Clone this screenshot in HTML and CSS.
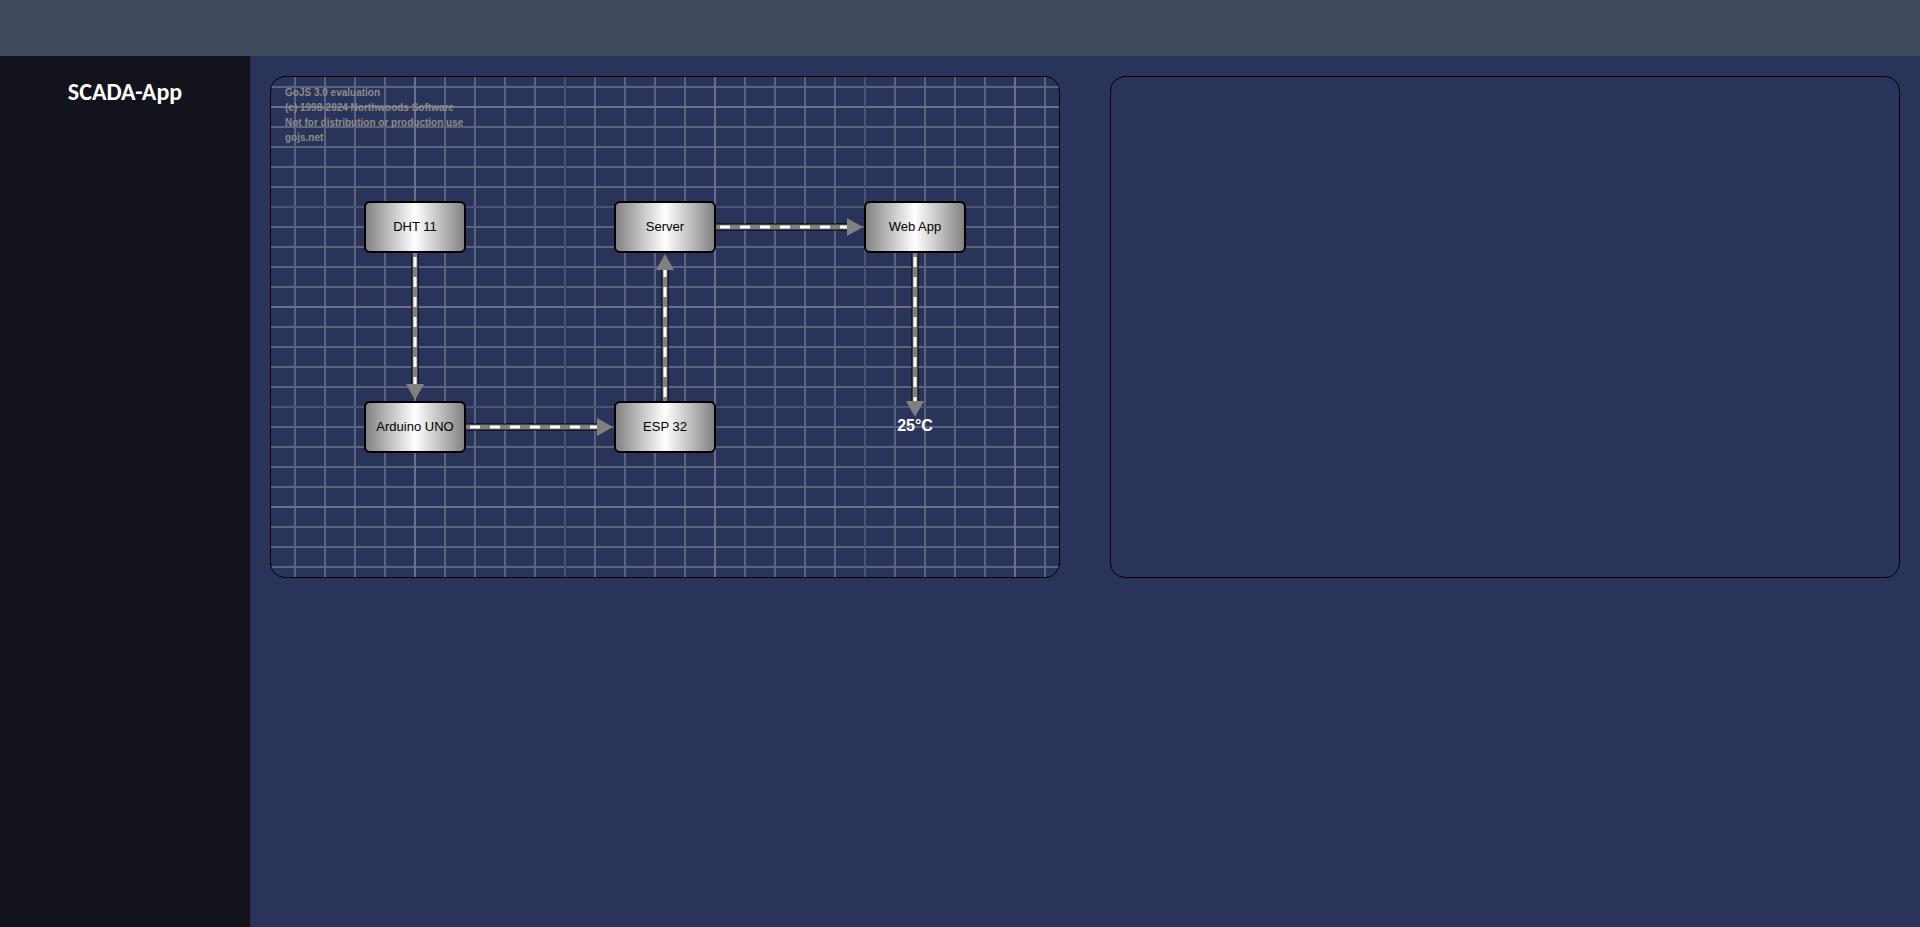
FILE: index.html
```html
<!DOCTYPE html>
<html lang="en">
<head>
<meta charset="utf-8">
<title>SCADA-App</title>
<link rel="stylesheet" href="styles.css">
</head>
<body>
<header class="topbar"></header>
<div class="shell">
  <aside class="sidebar"><h1 class="brand">SCADA-App</h1></aside>
  <main class="panels">
    <section class="panel">
      <svg class="diagram" role="img" aria-label="Process diagram">
        <defs>
          <linearGradient id="metal">
            <stop offset="0" stop-color="#808080"/>
            <stop offset="0.5" stop-color="#ffffff"/>
            <stop offset="1" stop-color="#808080"/>
          </linearGradient>
          <pattern id="minor" x="-6" y="0" width="30" height="20" patternUnits="userSpaceOnUse">
            <path class="line" d="M0 10H30M30 0V20M0 0V20"/>
          </pattern>
          <pattern id="major" x="44" y="130" width="300" height="200" patternUnits="userSpaceOnUse">
            <path class="line-major" d="M0 100H300M100 0V200"/>
            <path class="line-mid" d="M0 200H300M0 0H300M250 0V200"/>
          </pattern>
          <g id="node"><rect class="node" x="-50" y="-25" width="100" height="50" rx="5"/></g>
        </defs>
        <rect width="100%" height="100%" fill="url(#minor)"/>
        <rect width="100%" height="100%" fill="url(#major)"/>

        <g class="watermark">
          <text x="14" y="19">GoJS 3.0 evaluation</text>
          <text x="14" y="34">(c) 1998-2024 Northwoods Software</text>
          <text x="14" y="49">Not for distribution or production use</text>
          <text x="14" y="64">gojs.net</text>
        </g>

        <g class="pipe">
          <path d="M144 176V308M195 350H327M394 324V192M445 150H577M644 176V325"/>
          <path class="pipe-body" d="M144 176V308M195 350H327M394 324V192M445 150H577M644 176V325"/>
          <path class="pipe-flow" d="M144 176V308M195 350H327M394 324V192M445 150H577M644 176V325"/>
        </g>
        <path class="arrow" d="M135 307H153L144 323ZM326 341V359L342 350ZM385 193H403L394 177ZM576 141V159L592 150ZM635 324H653L644 340Z"/>

        <g class="labels">
          <use href="#node" x="144" y="150"/><text x="144" y="154">DHT 11</text>
          <use href="#node" x="394" y="150"/><text x="394" y="154">Server</text>
          <use href="#node" x="644" y="150"/><text x="644" y="154">Web App</text>
          <use href="#node" x="144" y="350"/><text x="144" y="354">Arduino UNO</text>
          <use href="#node" x="394" y="350"/><text x="394" y="354">ESP 32</text>
        </g>
        <text class="reading" x="644" y="354">25°C</text>
      </svg>
    </section>
    <section class="panel"></section>
  </main>
</div>
</body>
</html>
```
FILE: styles.css
```css
* { box-sizing: border-box; }
body {
  margin: 0;
  min-height: 100vh;
  display: flex;
  flex-direction: column;
  background: #2a3359;
  font-family: "Liberation Sans", Arial, sans-serif;
}
.topbar { height: 56px; background: #3e4a5c; }
.shell { flex: 1; display: flex; }
.sidebar { width: 250px; padding: 20px; background: #13131e; text-align: center; }
.brand {
  margin: 0;
  color: #fff;
  font: bold 24px/32px Calibri, Carlito, "Open Sans", sans-serif;
}
.panels {
  flex: 1;
  display: grid;
  grid-template-columns: 1fr 1fr;
  align-items: start;
  gap: 50px;
  padding: 20px;
}
.panel {
  height: 502px;
  border: 1px solid #000;
  border-radius: 15px;
  overflow: hidden;
}
.diagram { display: block; width: 100%; height: 100%; }
.line { stroke: #d3d3d3; stroke-opacity: 0.3; stroke-width: 2; }
.line-major { stroke: #d3d3d3; stroke-opacity: 0.12; stroke-width: 2; }
.line-mid { stroke: #2a3359; stroke-opacity: 0.35; stroke-width: 2; }
.watermark { font-size: 10px; font-weight: bold; fill: #8f8c88; }
.pipe { fill: none; stroke: #000; stroke-width: 7; }
.pipe-body { stroke: #808080; stroke-width: 5; }
.pipe-flow { stroke: #fff; stroke-width: 3; stroke-dasharray: 10 10; stroke-dashoffset: -4; }
.arrow { fill: #808080; }
.node { fill: url(#metal); stroke: #000; stroke-width: 2; }
.labels { font-size: 13px; text-anchor: middle; fill: #000; }
.reading { font-size: 16px; font-weight: bold; text-anchor: middle; fill: #fff; }
```
